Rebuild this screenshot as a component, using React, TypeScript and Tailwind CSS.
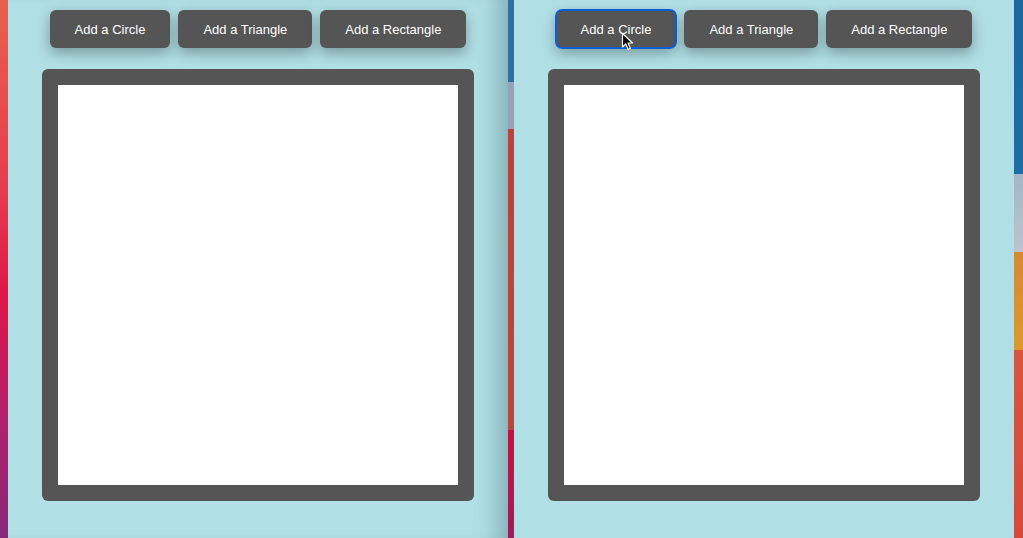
import React from "react";

const labels = ["Add a Circle", "Add a Triangle", "Add a Rectangle"];

function Pane({ focused, shaded }: { focused?: boolean; shaded?: boolean }) {
  return (
    <div
      className={
        "relative w-[500px] h-full bg-[#b0dfe5] flex flex-col items-center pt-[10px] " +
        (shaded ? "shadow-[inset_-26px_0_24px_-18px_rgba(0,40,50,0.28)]" : "")
      }
    >
      <div className="flex gap-2">
        {labels.map((label, i) => (
          <button
            key={label}
            className={
              "h-[38px] px-[25px] pt-[2px] rounded-md bg-[#555555] text-white text-[13px] shadow-[0_5px_14px_rgba(0,0,0,0.32)] " +
              (focused && i === 0 ? "outline-2 outline-[#0d5fd8] outline-offset-[-1px] ring-1 ring-white" : "")
            }
            style={{ fontFamily: '"Liberation Sans", Arial, sans-serif' }}
          >
            {label}
          </button>
        ))}
      </div>
      <div className="mt-[21px] p-4 rounded-md bg-[#555555]">
        <div className="w-[400px] h-[400px] bg-white" />
      </div>
      {focused && (
        <svg className="absolute left-[107px] top-[32px]" width="14" height="19" viewBox="0 0 14 19">
          <path
            d="M1.5 1.5 L1.5 15 L4.8 11.9 L7.2 17.3 L9.4 16.3 L7 11 L11.5 11 Z"
            fill="#000"
            stroke="#fff"
            strokeWidth="1.2"
            strokeLinejoin="round"
          />
        </svg>
      )}
    </div>
  );
}

export default function App() {
  return (
    <div className="w-[1023px] h-[538px] flex overflow-hidden">
      <div className="w-[8px] h-full bg-[linear-gradient(to_bottom,#e8604f_0%,#e63c4e_35%,#de1548_55%,#b81e6a_75%,#86287a_100%)]" />
      <Pane shaded />
      <div className="w-[6px] h-full bg-[linear-gradient(to_bottom,#2d71a0_0px,#2d71a0_82px,#99a1b9_82px,#99a1b9_129px,#bb4238_129px,#b9483a_430px,#c3123f_430px,#b5184c_480px,#9c1c5c_538px)]" />
      <Pane focused />
      <div className="w-[9px] h-full bg-[linear-gradient(to_bottom,#1b67a0_0px,#1d6ea4_174px,#a4b6c8_174px,#bcc4cc_252px,#d58a32_252px,#d89a30_350px,#d65540_350px,#d24a3a_538px)]" />
    </div>
  );
}
